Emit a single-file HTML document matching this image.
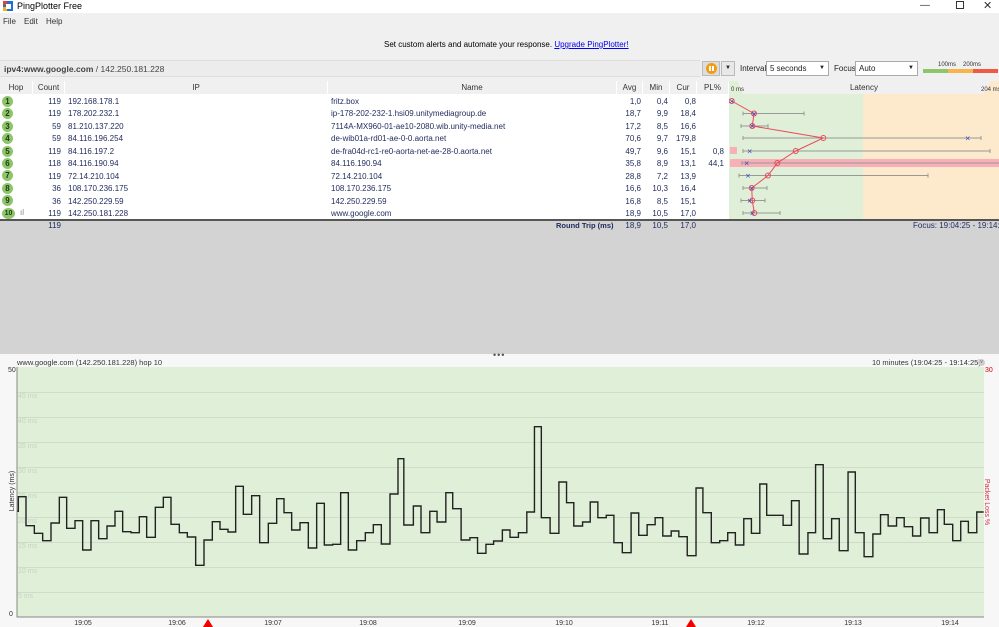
<!DOCTYPE html>
<html><head><meta charset="utf-8">
<style>
*{margin:0;padding:0;box-sizing:border-box}
body{width:999px;height:627px;overflow:hidden;background:#f0f0f0;font-family:"Liberation Sans",sans-serif;font-size:8px;color:#1f2a5c;position:relative}
.a{position:absolute;white-space:nowrap}
.hd{position:absolute;top:81px;height:13px;background:#f0f0f0;border-right:1px solid #fff;text-align:center;line-height:13px;color:#333;font-size:8px}
.r{text-align:right}
.hop{position:absolute;left:2px;width:11px;height:11px;border-radius:50%;background:#8cc56a;color:#1f3a10;font-size:8px;text-align:center;line-height:11px;font-weight:bold}
</style></head><body>
<div class="a" style="left:0;top:0;width:999px;height:13px;background:#fff"></div>
<svg class="a" style="left:3px;top:1px" width="10" height="10"><rect x="0" y="0" width="10" height="10" fill="#1e6fd9"/><rect x="0" y="0" width="4" height="4" fill="#e8412c"/><rect x="0" y="6" width="4" height="4" fill="#f3b21b"/><rect x="3" y="3" width="5" height="5" fill="#fff"/></svg>
<div class="a" style="left:17px;top:1px;font-size:9px;color:#000">PingPlotter Free</div>
<div class="a" style="left:920px;top:0px;font-size:10px;color:#333">—</div>
<div class="a" style="left:956px;top:1px;width:8px;height:8px;border:1px solid #333"></div>
<div class="a" style="left:983px;top:-1px;font-size:11px;color:#333">✕</div>
<div class="a" style="left:3px;top:17px;color:#333;font-size:8px">File</div>
<div class="a" style="left:24px;top:17px;color:#333;font-size:8px">Edit</div>
<div class="a" style="left:46px;top:17px;color:#333;font-size:8px">Help</div>
<div class="a" style="left:384px;top:40px;color:#000;font-size:8px">Set custom alerts and automate your response. <span style="color:#0000ee;text-decoration:underline">Upgrade PingPlotter!</span></div>
<div class="a" style="left:0;top:60px;width:700px;height:17px;background:#ececec;border-top:1px solid #ddd;border-bottom:1px solid #ddd"></div>
<div class="a" style="left:4px;top:64px;color:#444;font-size:8.5px"><b>ipv4:www.google.com</b> / 142.250.181.228</div>
<div class="a" style="left:702px;top:61px;width:18px;height:15px;background:#ddd;border:1px solid #bbb"></div>
<div class="a" style="left:706px;top:63px;width:11px;height:11px;border-radius:50%;background:#f39c12"></div>
<div class="a" style="left:709px;top:66px;width:2px;height:5px;background:#fff"></div><div class="a" style="left:712px;top:66px;width:2px;height:5px;background:#fff"></div>
<div class="a" style="left:721px;top:61px;width:14px;height:15px;background:#e8e8e8;border:1px solid #bbb;font-size:6px;text-align:center;line-height:13px;color:#222">▼</div>
<div class="a" style="left:740px;top:64px;color:#222">Interval</div>
<div class="a" style="left:766px;top:61px;width:63px;height:15px;background:#fff;border:1px solid #aaa;padding-left:3px;line-height:13px;color:#222">5 seconds<span style="position:absolute;right:3px;font-size:6px">▼</span></div>
<div class="a" style="left:834px;top:64px;color:#222">Focus</div>
<div class="a" style="left:855px;top:61px;width:63px;height:15px;background:#fff;border:1px solid #aaa;padding-left:3px;line-height:13px;color:#222">Auto<span style="position:absolute;right:3px;font-size:6px">▼</span></div>
<div class="a" style="left:923px;top:69px;width:25px;height:4px;background:#8cc56a"></div>
<div class="a" style="left:948px;top:69px;width:25px;height:4px;background:#f6b44a"></div>
<div class="a" style="left:973px;top:69px;width:25px;height:4px;background:#ee5a44"></div>
<div class="a" style="left:938px;top:62px;font-size:6px;color:#333">100ms</div>
<div class="a" style="left:963px;top:62px;font-size:6px;color:#333">200ms</div>
<div class="a" style="left:0;top:94px;width:999px;height:126px;background:#fff"></div>
<div class="hd" style="left:0;width:33px">Hop</div>
<div class="hd" style="left:33px;width:32px">Count</div>
<div class="hd" style="left:65px;width:263px">IP</div>
<div class="hd" style="left:328px;width:289px">Name</div>
<div class="hd" style="left:617px;width:26px">Avg</div>
<div class="hd" style="left:643px;width:27px">Min</div>
<div class="hd" style="left:670px;width:27px">Cur</div>
<div class="hd" style="left:697px;width:32px">PL%</div>
<svg class="a" style="left:729px;top:81px" width="270" height="139">
<rect x="0" y="13" width="134" height="126" fill="#e0f0d8"/>
<rect x="134" y="13" width="136" height="126" fill="#fde9cc"/>
<polygon points="0,0 8,0 14,13 0,13" fill="#e0f0d8"/>
<polygon points="270,0 262,0 254,13 270,13" fill="#fde9cc"/>
<text x="2" y="10" font-size="6" fill="#333" font-family="Liberation Sans">0 ms</text>
<text x="135" y="9" font-size="8" fill="#333" text-anchor="middle" font-family="Liberation Sans">Latency</text>
<text x="252" y="10" font-size="6" fill="#333" font-family="Liberation Sans">204 ms</text>
<rect x="1" y="66" width="7" height="7" fill="#f8b0b8"/>
<rect x="1" y="78" width="269" height="8" fill="#f8b0b8"/>
<g stroke="#999" stroke-width="1" fill="none">
<path d="M14 32.5H75M14 30.5v4M75 30.5v4"/>
<path d="M12 45H39M12 43v4M39 43v4"/>
<path d="M14 57H252M14 55v4M252 55v4"/>
<path d="M14 70H261M14 68v4M261 68v4"/>
<path d="M13 82H270M13 80v4"/>
<path d="M10 94.5H199M10 92.5v4M199 92.5v4"/>
<path d="M14 107H38M14 105v4M38 105v4"/>
<path d="M12 119.5H36M12 117.5v4M36 117.5v4"/>
<path d="M14 132H51M14 130v4M51 130v4"/>
</g>
<polyline points="2.7,20 25,32.5 23.3,45 94.3,57 66.7,70 48.3,82 39,94.5 22.7,107 23.3,119.5 25.3,132" fill="none" stroke="#e84a5a" stroke-width="1"/>
<g fill="none" stroke="#e84a5a" stroke-width="1">
<circle cx="2.7" cy="20" r="2.5"/><circle cx="25" cy="32.5" r="2.5"/><circle cx="23.3" cy="45" r="2.5"/><circle cx="94.3" cy="57" r="2.5"/><circle cx="66.7" cy="70" r="2.5"/><circle cx="48.3" cy="82" r="2.5"/><circle cx="39" cy="94.5" r="2.5"/><circle cx="22.7" cy="107" r="2.5"/><circle cx="23.3" cy="119.5" r="2.5"/><circle cx="25.3" cy="132" r="2.5"/>
</g>
<g font-size="7" fill="#3333cc" text-anchor="middle" font-family="DejaVu Sans">
<text x="2.7" y="22.5">×</text><text x="25" y="35">×</text><text x="23.3" y="47.5">×</text><text x="238.7" y="59.5">×</text><text x="20.7" y="72.5">×</text><text x="17.7" y="84.5">×</text><text x="19" y="97">×</text><text x="22.7" y="109.5">×</text><text x="20.7" y="122">×</text><text x="23.3" y="134.5">×</text>
</g>
</svg>
<div class="hop" style="top:96px">1</div>
<div class="hop" style="top:108px">2</div>
<div class="hop" style="top:121px">3</div>
<div class="hop" style="top:133px">4</div>
<div class="hop" style="top:146px">5</div>
<div class="hop" style="top:158px">6</div>
<div class="hop" style="top:170px">7</div>
<div class="hop" style="top:183px">8</div>
<div class="hop" style="top:195px">9</div>
<div class="hop" style="top:208px;width:13px;font-size:7px">10</div>
<div class="a" style="left:20px;top:208px;color:#888;font-size:8px">ıl</div>
<div class="a r" style="left:33px;top:96px;width:28px;line-height:12.45px">119<br>119<br>59<br>59<br>119<br>118<br>119<br>36<br>36<br>119<br>119</div>
<div class="a" style="left:68px;top:96px;line-height:12.45px">192.168.178.1<br>178.202.232.1<br>81.210.137.220<br>84.116.196.254<br>84.116.197.2<br>84.116.190.94<br>72.14.210.104<br>108.170.236.175<br>142.250.229.59<br>142.250.181.228</div>
<div class="a" style="left:331px;top:96px;line-height:12.45px">fritz.box<br>ip-178-202-232-1.hsi09.unitymediagroup.de<br>7114A-MX960-01-ae10-2080.wib.unity-media.net<br>de-wib01a-rd01-ae-0-0.aorta.net<br>de-fra04d-rc1-re0-aorta-net-ae-28-0.aorta.net<br>84.116.190.94<br>72.14.210.104<br>108.170.236.175<br>142.250.229.59<br>www.google.com</div>
<div class="a r" style="left:617px;top:96px;width:24px;line-height:12.45px">1,0<br>18,7<br>17,2<br>70,6<br>49,7<br>35,8<br>28,8<br>16,6<br>16,8<br>18,9</div>
<div class="a r" style="left:643px;top:96px;width:25px;line-height:12.45px">0,4<br>9,9<br>8,5<br>9,7<br>9,6<br>8,9<br>7,2<br>10,3<br>8,5<br>10,5</div>
<div class="a r" style="left:670px;top:96px;width:26px;line-height:12.45px">0,8<br>18,4<br>16,6<br>179,8<br>15,1<br>13,1<br>13,9<br>16,4<br>15,1<br>17,0</div>
<div class="a r" style="left:697px;top:146px;width:27px;line-height:12.45px">0,8<br>44,1</div>
<div class="a" style="left:0;top:219px;width:999px;height:2px;background:#555"></div>
<div class="a" style="left:0;top:221px;width:999px;height:133px;background:#d3d3d3"></div>
<div class="a r" style="left:33px;top:221px;width:28px">119</div>
<div class="a" style="left:556px;top:221px;font-weight:bold;font-size:7.5px">Round Trip (ms)</div>
<div class="a r" style="left:617px;top:221px;width:24px">18,9</div>
<div class="a r" style="left:643px;top:221px;width:25px">10,5</div>
<div class="a r" style="left:670px;top:221px;width:26px">17,0</div>
<div class="a" style="left:913px;top:221px">Focus: 19:04:25 - 19:14:25</div>
<div class="a" style="left:0;top:354px;width:999px;height:273px;background:#f7f7f7"></div>
<div class="a" style="left:493px;top:350px;font-size:9px;color:#555;letter-spacing:1px">•••</div>
<div class="a" style="left:17px;top:358px;font-size:7.5px;color:#333">www.google.com (142.250.181.228) hop 10</div>
<div class="a" style="left:872px;top:358px;font-size:7.5px;color:#333">10 minutes (19:04:25 - 19:14:25)</div>
<div class="a" style="left:978px;top:359px;width:7px;height:7px;border-radius:50%;background:#ccc;font-size:5px;text-align:center;line-height:7px;color:#666">v</div>
<svg class="a" style="left:0;top:354px" width="999" height="273">
<rect x="17" y="13" width="967" height="250" fill="#e0f0d8"/>
<g stroke="#cfdcc8" stroke-width="1">
<path d="M17 38.5H984M17 63.5H984M17 88.5H984M17 113.5H984M17 138.5H984M17 163.5H984M17 188.5H984M17 213.5H984M17 238.5H984"/>
</g>
<g font-size="7" fill="#c8d2c4" font-family="Liberation Sans">
<text x="18" y="44">45 ms</text><text x="18" y="69">40 ms</text><text x="18" y="94">35 ms</text><text x="18" y="119">30 ms</text><text x="18" y="144">25 ms</text><text x="18" y="169">20 ms</text><text x="18" y="194">15 ms</text><text x="18" y="219">10 ms</text><text x="18" y="244">5 ms</text>
</g>
<path d="M17 13V263H984" fill="none" stroke="#888" stroke-width="1"/>
<text x="8" y="18" font-size="7" fill="#333" font-family="Liberation Sans">50</text>
<text x="9" y="262" font-size="7" fill="#333" font-family="Liberation Sans">0</text>
<text x="985" y="18" font-size="7" fill="#d00" font-family="Liberation Sans">30</text>
<text transform="translate(14,137) rotate(-90)" font-size="7" fill="#333" text-anchor="middle" font-family="Liberation Sans">Latency (ms)</text>
<text transform="translate(985,148) rotate(90)" font-size="7" fill="#d03040" text-anchor="middle" font-family="Liberation Sans">Packet Loss %</text>
<g font-size="7" fill="#333" text-anchor="middle" font-family="Liberation Sans">
<text x="83" y="271">19:05</text><text x="177" y="271">19:06</text><text x="273" y="271">19:07</text><text x="368" y="271">19:08</text><text x="467" y="271">19:09</text><text x="564" y="271">19:10</text><text x="660" y="271">19:11</text><text x="756" y="271">19:12</text><text x="853" y="271">19:13</text><text x="950" y="271">19:14</text>
</g>
<polygon points="203,273 208,265 213,273" fill="#e00"/>
<polygon points="686,273 691,265 696,273" fill="#e00"/>
<g transform="translate(0,-4) scale(0.33333,0.33333)">
<path vector-effect="non-scaling-stroke" fill="none" stroke="#222" stroke-width="1.4" d="M52 484H55V440H78V527H103V550H128V572H153V519H178V442H200V535H225V512H248V600H273V512H296V566H321V528H345V484H368V545H393V548H418V500H440V562H466V472H490V442H513V523H538V548H562V561H587V646H612V570H637V515H660V538H684V546H707V409H730V493H755V437H779V578H805V520H830V446H852V488H875V540H900V518H925V594H950V460H973V585H998V583H1022V428H1045V600H1070V572H1096V548H1120V524H1144V582H1170V432H1194V326H1200"/>
</g>
<g transform="translate(400,-4) scale(0.38197,0.33333)">
<path vector-effect="non-scaling-stroke" fill="none" stroke="#222" stroke-width="1.4" d="M0 326H10V525H35V468H55V548H78V484H97V516H120V428H138V476H160V570H183V563H203V610H225V583H245V573H268V540H288V562H310V548H332V486H352V230H370V503H393V550H416V396H436V458H455V528H478V516H498V456H518V503H540V496H560V578H582V608H605V489H625V556H647V524H668V503H688V558H710V543H730V560H752V617H775V414H793V488H815V578H837V572H858V548H878V585H900V506H920V550H942V402H960V496H1003V526H1025V452H1045V612H1068V548H1088V344H1108V566H1130V506H1150V602H1173V366H1192V548H1215V620H1238V552H1258V494H1278V528H1300V503H1320V530H1342V558H1363V504H1385V548H1407V479H1425V523H1447V572H1468V514H1488V548H1510V486H1528"/>
</g>
</svg>
</body></html>
